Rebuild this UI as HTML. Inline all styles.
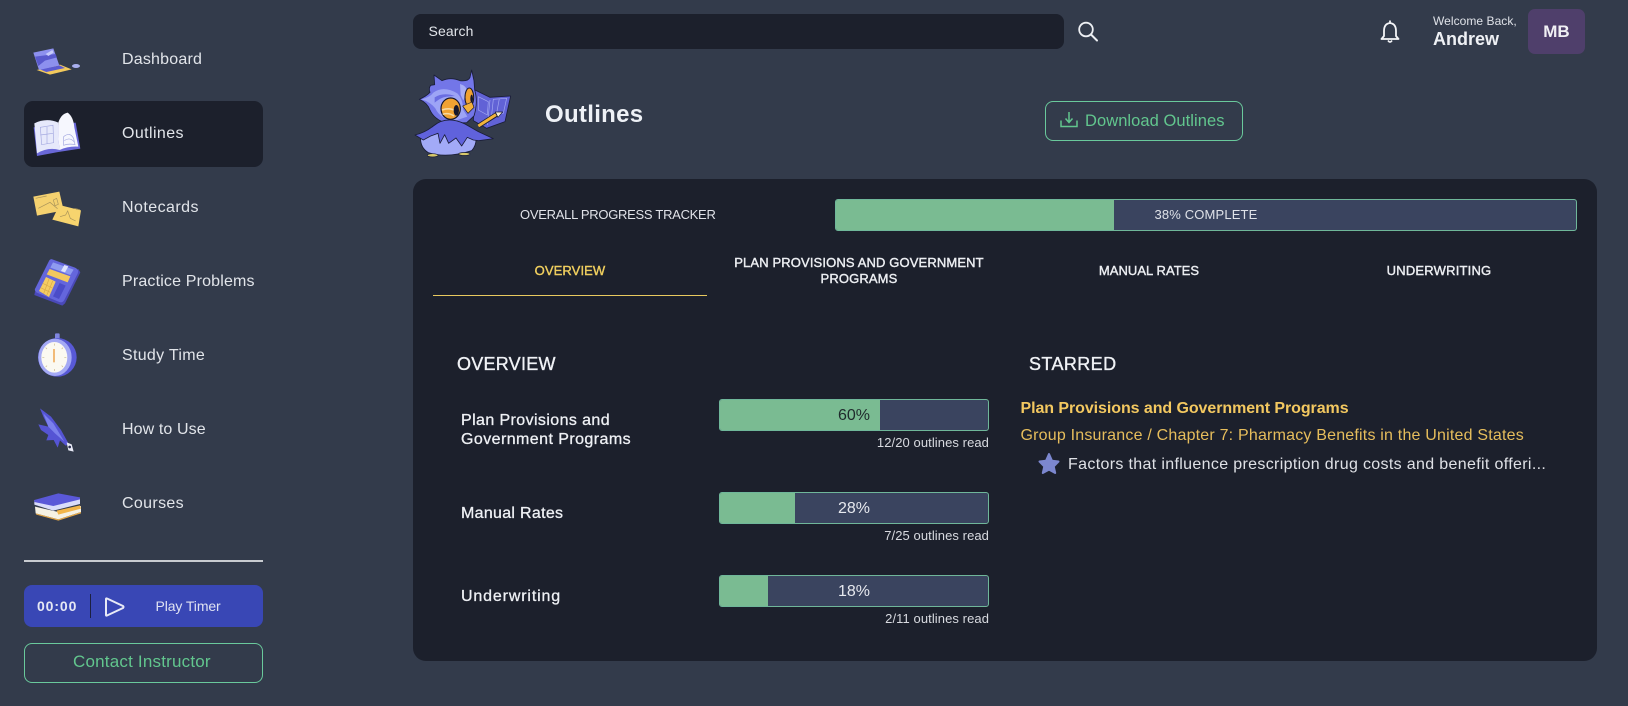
<!DOCTYPE html>
<html lang="en">
<head>
<meta charset="utf-8">
<title>Outlines</title>
<style>
*{box-sizing:border-box;margin:0;padding:0}
html,body{width:1628px;height:706px;overflow:hidden;background:#333b4b}
body{position:relative;font-family:"Liberation Sans",Arial,sans-serif;color:#e8eaf0}
.a{position:absolute}
.t{position:absolute;white-space:nowrap;height:20px;line-height:20px}
.nav{font-size:16px;color:#e2e5ea;left:122px}
.tab{font-size:13px;width:274px;text-align:center;-webkit-text-stroke:.4px;color:#eceef2;line-height:16px;white-space:normal}
.m{-webkit-text-stroke:.35px}
.bar{position:absolute;left:719px;width:270px;height:32px;background:#3a445f;border:1px solid #6fb79a;border-radius:3px;overflow:hidden}
.fill{position:absolute;left:-1px;top:-1px;height:32px;background:#7abb92}
.pct{position:absolute;left:719px;width:270px;text-align:center;font-size:16px;height:32px;line-height:34px;color:#e6e8ee}
.cap{position:absolute;right:639px;font-size:13px;letter-spacing:.08px;color:#d8dae0;height:16px;line-height:16px;white-space:nowrap}
.row{position:absolute;left:461px;font-size:16px;letter-spacing:.4px;color:#eef0f4;-webkit-text-stroke:.3px;line-height:19px;white-space:nowrap}
svg{position:absolute;left:0;top:0}
</style>
</head>
<body>
<!-- sidebar -->
<div class="a" style="left:24px;top:101px;width:239px;height:66px;background:#1c202c;border-radius:9px"></div>
<div class="t nav" style="top:50px;letter-spacing:.2px">Dashboard</div>
<div class="t nav" style="top:124px;letter-spacing:.4px">Outlines</div>
<div class="t nav" style="top:198px;letter-spacing:.45px">Notecards</div>
<div class="t nav" style="top:272px;letter-spacing:.17px">Practice Problems</div>
<div class="t nav" style="top:346px;letter-spacing:.3px">Study Time</div>
<div class="t nav" style="top:420px;letter-spacing:.1px">How to Use</div>
<div class="t nav" style="top:494px;letter-spacing:.35px">Courses</div>
<div class="a" style="left:24px;top:560px;width:239px;height:2px;background:#c8cbd0"></div>
<div class="a" style="left:24px;top:585px;width:239px;height:42px;background:#3947b5;border-radius:8px"></div>
<div class="t" style="left:37px;top:596px;font-size:14px;font-weight:700;letter-spacing:.9px;color:#e6e8f4">00:00</div>
<div class="a" style="left:90px;top:594px;width:1px;height:24px;background:#1c2040"></div>
<div class="t" style="left:155.5px;top:596px;font-size:14px;letter-spacing:-.1px;color:#dfe2f2">Play Timer</div>
<div class="a" style="left:24px;top:643px;width:239px;height:40px;border:1px solid #6ac99c;border-radius:8px"></div>
<div class="t" style="left:73px;top:652px;font-size:17px;letter-spacing:.2px;color:#62c68e">Contact Instructor</div>

<!-- top -->
<div class="a" style="left:413px;top:14px;width:651px;height:35px;background:#1c202c;border-radius:8px"></div>
<div class="t" style="left:428.5px;top:21px;font-size:14px;letter-spacing:.1px;color:#e2e5ea">Search</div>
<div class="t" style="left:1433px;top:11px;font-size:12px;letter-spacing:.05px;color:#dfe2e8">Welcome Back,</div>
<div class="t" style="left:1433px;top:29px;font-size:18px;font-weight:700;letter-spacing:0;color:#eef0f4">Andrew</div>
<div class="a" style="left:1528px;top:9px;width:57px;height:45px;background:#4f3f6b;border-radius:7px;text-align:center;line-height:45px;font-size:17px;font-weight:700;color:#f0f0f4">MB</div>
<div class="t" style="left:545px;top:103px;font-size:24px;font-weight:700;letter-spacing:.3px;color:#eef1f6;height:24px;line-height:24px">Outlines</div>
<div class="a" style="left:1045px;top:101px;width:198px;height:40px;border:1px solid #6ac99c;border-radius:8px"></div>
<div class="t" style="left:1085px;top:111px;font-size:16.5px;letter-spacing:.06px;color:#62c68e">Download Outlines</div>

<!-- card -->
<div class="a" style="left:413px;top:179px;width:1184px;height:482px;background:#1c202c;border-radius:13px"></div>
<div class="t" style="left:520px;top:205px;font-size:13px;letter-spacing:-.28px;color:#e0e2e8">OVERALL PROGRESS TRACKER</div>
<div class="a" style="left:835px;top:199px;width:742px;height:32px;background:#3a445f;border:1px solid #6fb79a;border-radius:3px;overflow:hidden"><div class="fill" style="width:279px"></div></div>
<div class="t" style="left:835px;top:205px;width:742px;text-align:center;font-size:13px;letter-spacing:.15px;color:#dfe2e8">38% COMPLETE</div>

<div class="t tab" style="left:433px;top:263px;color:#efce5e;letter-spacing:.1px">OVERVIEW</div>
<div class="a" style="left:433px;top:295px;width:274px;height:1px;background:#e8c95f"></div>
<div class="t tab" style="left:715px;top:255px;width:288px;height:34px;letter-spacing:.13px">PLAN PROVISIONS AND GOVERNMENT PROGRAMS</div>
<div class="t tab" style="left:1012px;top:263px;letter-spacing:.05px">MANUAL RATES</div>
<div class="t tab" style="left:1302px;top:263px;letter-spacing:.2px">UNDERWRITING</div>

<div class="t m" style="left:457px;top:354px;font-size:18px;letter-spacing:.25px;color:#f0f2f6">OVERVIEW</div>
<div class="t m" style="left:1029px;top:354px;font-size:18px;letter-spacing:.4px;color:#f0f2f6">STARRED</div>

<div class="row" style="top:411px">Plan Provisions and<br><span style="letter-spacing:.43px">Government Programs</span></div>
<div class="row" style="top:504px;line-height:20px;letter-spacing:.3px">Manual Rates</div>
<div class="row" style="top:587px;line-height:20px;letter-spacing:.85px">Underwriting</div>

<div class="bar" style="top:399px"><div class="fill" style="width:161px"></div></div>
<div class="pct" style="top:399px;color:#1f2a2c">60%</div>
<div class="cap" style="top:435px">12/20 outlines read</div>
<div class="bar" style="top:492px"><div class="fill" style="width:76px"></div></div>
<div class="pct" style="top:492px">28%</div>
<div class="cap" style="top:528px">7/25 outlines read</div>
<div class="bar" style="top:575px"><div class="fill" style="width:49px"></div></div>
<div class="pct" style="top:575px">18%</div>
<div class="cap" style="top:611px">2/11 outlines read</div>

<div class="t" style="left:1020.5px;top:399px;font-size:16px;font-weight:700;letter-spacing:-.07px;color:#f3c860">Plan Provisions and Government Programs</div>
<div class="t" style="left:1020.5px;top:426px;font-size:16px;letter-spacing:.2px;color:#e6bd5c">Group Insurance / Chapter 7: Pharmacy Benefits in the United States</div>
<div class="t" style="left:1068px;top:455px;font-size:16px;letter-spacing:.34px;color:#dfe1e6">Factors that influence prescription drug costs and benefit offeri...</div>

<svg width="1628" height="706" viewBox="0 0 1628 706" xmlns="http://www.w3.org/2000/svg">
  <!-- play -->
  <path d="M107 598.5 L123 606 Q124 607 123 608 L107 615.5 Q106 616 106 615 V599 Q106 598 107 598.5Z" fill="none" stroke="#e8eaf6" stroke-width="2" stroke-linejoin="round"/>
  <!-- search -->
  <circle cx="1086" cy="29.5" r="6.8" fill="none" stroke="#eef0f4" stroke-width="1.8"/>
  <path d="M1091 34.5 L1097 40.5" stroke="#eef0f4" stroke-width="2" stroke-linecap="round"/>
  <!-- bell -->
  <path d="M1390 20.5 V23 C1386 23.5 1384 26.5 1384 31 V36 L1381.5 39 H1398.5 L1396 36 V31 C1396 26.5 1394 23.5 1390 23" fill="none" stroke="#f4f5f8" stroke-width="1.8" stroke-linejoin="round"/>
  <path d="M1388 40.5 Q1390 43.5 1392 40.5" fill="none" stroke="#f4f5f8" stroke-width="1.6"/>
  <!-- download -->
  <path d="M1069 112 V122 M1065.5 118.5 L1069 122.5 L1072.5 118.5" fill="none" stroke="#62c68e" stroke-width="1.5"/>
  <path d="M1061 120.5 V126.5 H1077 V120.5" fill="none" stroke="#62c68e" stroke-width="1.5"/>
  <!-- star -->
  <path d="M1049 454 L1052 460.8 L1058.5 461.5 L1053.7 466.4 L1055.2 473 L1049 469.6 L1042.8 473 L1044.3 466.4 L1039.5 461.5 L1046 460.8Z" fill="#7c87cf" stroke="#7c87cf" stroke-width="2" stroke-linejoin="round"/>

  <!-- laptop -->
  <g transform="translate(25,40) scale(.3333)">
    <path d="M35 90 L105 74 L140 88 L75 104Z" fill="#f3c95c"/>
    <path d="M45 88 L104 76 L120 84 L64 96Z" fill="#5b5ad2"/>
    <path d="M25 38 L85 25 L103 76 L42 90Z" fill="#8d90ee"/>
    <path d="M30 50 L92 42 L96 52 L60 62 L40 78Z" fill="#4c4bc4" opacity=".8"/>
    <path d="M62 42 L82 30 L86 38 L70 48Z" fill="#c7cbfa"/>
    <ellipse cx="153" cy="78" rx="12" ry="6" fill="#a9afee"/>
  </g>
  <!-- book -->
  <g transform="translate(25,40) scale(.3333)">
    <path d="M26 262 L36 348 L100 336 L166 326 L152 248Z" fill="#6a68d8"/>
    <path d="M28 250 Q65 232 100 248 Q98 290 104 330 Q70 320 36 340Z" fill="#e6e9fb"/>
    <path d="M100 248 Q108 222 128 218 Q145 230 148 262 L160 320 Q130 318 104 330 Q98 290 100 248Z" fill="#f6f7fe"/>
    <path d="M46 262 L84 256 L86 308 L50 314Z M66 258 V312 M46 285 L85 280 M116 290 Q135 274 146 296 L150 314 Q130 310 116 316Z M118 302 Q134 290 148 306" fill="none" stroke="#a4a9e0" stroke-width="2"/>
  </g>
  <!-- notecards -->
  <g transform="translate(25,185) scale(.3333)">
    <path d="M25 35 L103 20 L116 76 L36 92Z" fill="#f5d16f"/>
    <path d="M40 70 L75 52 L108 80 M85 45 L95 40 L100 58 L90 62Z M32 40 L65 33" fill="none" stroke="#a8935a" stroke-width="2"/>
    <path d="M103 60 L168 76 L160 124 L82 104Z" fill="#f7d46e"/>
    <path d="M105 95 L122 90 L128 78 L136 100 L152 108 M148 70 L165 74" fill="none" stroke="#a8935a" stroke-width="2"/>
  </g>
  <!-- calculator -->
  <g transform="translate(25,185) scale(.3333)">
    <path d="M30 320 L28 330 L112 362 L120 355 L166 262 L160 252 Z" fill="#4a49b8"/>
    <path d="M82 223 L150 248 Q164 254 158 266 L118 345 Q112 356 100 350 L34 322 Q26 316 32 308 L72 228 Q76 221 82 223Z" fill="#6466dc"/>
    <path d="M84 232 L146 254 L136 270 L76 248Z" fill="#8f9bf0"/>
    <path d="M118 240 L130 244 L120 262 L108 258Z" fill="#dfe3fc"/>
    <path d="M74 252 L136 274 L128 292 L65 268Z" fill="#f3c85e"/>
    <path d="M63 276 L92 290 L72 336 L42 318Z" fill="#f5cc62"/>
    <path d="M53 295 L82 309 M47 308 L76 322 M72 282 L56 326 M83 288 L65 332" stroke="#d9a94a" stroke-width="2"/>
    <path d="M104 294 L122 302 L102 342 L84 334Z" fill="#4b4cc8"/>
  </g>
  <!-- stopwatch -->
  <g transform="translate(25,325) scale(.3333)">
    <rect x="90" y="25" width="14" height="20" rx="3" fill="#7f85e0"/>
    <ellipse cx="97" cy="97" rx="58" ry="58" fill="#5859d6"/>
    <ellipse cx="90" cy="97" rx="50" ry="56" fill="#a4a9f4"/>
    <ellipse cx="88" cy="97" rx="39" ry="46" fill="#fbf9f1"/>
    <path d="M87 72 V112" stroke="#ec9a3a" stroke-width="4"/>
    <path d="M88 56 V62 M88 132 V138 M52 97 H58 M118 97 H124 M62 68 L66 72 M114 68 L110 72 M62 126 L66 122 M114 126 L110 122" stroke="#c9b98a" stroke-width="2"/>
  </g>
  <!-- quill -->
  <g transform="translate(25,325) scale(.3333)">
    <path d="M45 250 L78 275 L108 315 L132 358 L122 362 L105 346 L98 368 L86 345 L64 346 L70 330 L48 315 L40 298 L70 305 L55 275Z" fill="#5554d4"/>
    <path d="M55 265 L85 295 L118 350 L90 325 L70 305Z" fill="#7b80ec"/>
    <path d="M125 352 L140 358 L146 380 L130 376Z" fill="#e8eaf6"/>
    <circle cx="134" cy="366" r="4" fill="#2a2c50"/>
  </g>
  <!-- books -->
  <g transform="translate(25,480) scale(.3333)">
    <path d="M30 80 L100 96 L168 78 L168 96 L100 118 L32 100Z" fill="#f6f2e4"/>
    <path d="M95 92 L165 76 L168 86 L100 104Z" fill="#f3b64a"/>
    <path d="M32 100 L100 118 L168 96 L168 100 L100 122 L34 104Z" fill="#e6a948"/>
    <path d="M28 60 L100 72 L165 56 L165 72 L85 92 L28 74Z" fill="#d9dcfb"/>
    <path d="M28 60 L100 40 L165 52 L165 58 L85 78 L28 66Z" fill="#5a58d8"/>
  </g>
  <!-- owl -->
  <g transform="translate(410,60) scale(.3333)" stroke-linejoin="round">
    <path d="M195 90 L240 112 L302 108 L285 185 L230 205 L190 182Z" fill="#6162d6" stroke="#1a1d38" stroke-width="2.5"/>
    <path d="M205 110 L235 125 L232 165 L205 150Z M250 118 L290 115 L280 160 L245 165Z M240 120 L232 195 M268 116 L258 170" fill="none" stroke="#a3a9f2" stroke-width="2"/>
    <!-- lower body -->
    <path d="M32 225 Q28 262 55 278 Q110 296 185 272 Q205 250 195 215 L110 185Z" fill="#a2aaf7" stroke="#1a1d38" stroke-width="2.5"/>
    <!-- head -->
    <path d="M28 118 Q50 108 60 97 Q55 85 62 76 L74 74 L72 45 L96 62 Q122 50 150 62 Q175 65 180 52 L185 30 L192 62 L194 90 Q205 125 192 168 L170 188 L110 190 Q72 178 60 150 Q52 128 28 118Z" fill="#7376e8" stroke="#1a1d38" stroke-width="2.5"/>
    <path d="M34 118 Q60 112 70 98 Q100 76 142 100 Q158 115 160 150 L172 170 L130 184 Q90 175 76 145 Q60 125 34 118Z" fill="#9da4f6"/>
    <path d="M74 112 Q100 96 135 108 Q120 108 100 112 Q85 118 74 128Z" fill="#6a6de2"/>
    <path d="M150 72 Q172 78 170 96 L160 122 L152 105Z" fill="#a8aef7"/>
    <ellipse cx="122" cy="146" rx="29" ry="32" fill="#f0a232" stroke="#14162c" stroke-width="3.5"/>
    <path d="M96 150 Q118 142 136 152 M98 163 Q116 157 132 168" stroke="#f7d9a0" stroke-width="4.5" fill="none"/>
    <ellipse cx="139" cy="151" rx="8" ry="16" fill="#14162c"/>
    <ellipse cx="178" cy="112" rx="13" ry="28" fill="#f0a232" stroke="#14162c" stroke-width="3"/>
    <ellipse cx="185" cy="116" rx="4" ry="12" fill="#14162c"/>
    <path d="M158 138 L186 126 L192 142 L174 160 Z" fill="#f2b03c" stroke="#14162c" stroke-width="2"/>
    <!-- cape -->
    <path d="M15 225 Q45 218 70 198 Q110 165 165 192 L205 215 L250 236 L206 242 L190 240 L172 232 L155 258 L138 234 L116 250 L104 224 L90 250 L84 220 L62 228 L40 240Z" fill="#6062dc" stroke="#1a1d38" stroke-width="2.5"/>
    <path d="M205 198 L262 162" stroke="#1a1d38" stroke-width="14"/>
    <path d="M205 198 L258 164" stroke="#f2b43a" stroke-width="9"/>
    <path d="M256 156 L278 156 L264 172Z" fill="#f5ecd6" stroke="#1a1d38" stroke-width="2"/>
    <ellipse cx="68" cy="286" rx="16" ry="5" fill="#d8c96a" stroke="#1a1d38" stroke-width="2"/>
    <ellipse cx="163" cy="282" rx="17" ry="4.5" fill="#d8c96a" stroke="#1a1d38" stroke-width="2"/>
  </g>
</svg>
</body>
</html>
